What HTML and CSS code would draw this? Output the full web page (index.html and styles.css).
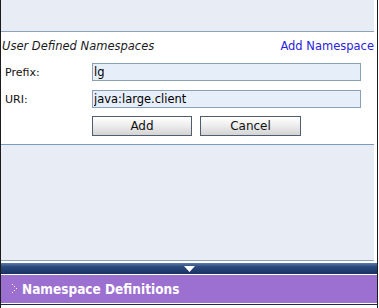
FILE: index.html
```html
<!DOCTYPE html>
<html lang="en">
  <head>
    <meta charset="UTF-8" />
    <title>User Defined Namespaces</title>
    <link rel="stylesheet" href="styles.css">
  </head>
  <body>
    <div class="frame">
      <div class="top-panel"></div>

      <div class="ns-form">
        <div class="ns-header">
          <span class="ns-title">User Defined Namespaces</span>
          <a class="ns-add" href="#">Add Namespace</a>
        </div>
        <div class="ns-row">
          <label for="prefix">Prefix:</label>
          <input type="text" id="prefix" value="lg" />
        </div>
        <div class="ns-row">
          <label for="uri">URI:</label>
          <input type="text" id="uri" value="java:large.client" />
        </div>
        <div class="ns-buttons">
          <button class="btn-add">Add</button>
          <button class="btn-cancel">Cancel</button>
        </div>
      </div>

      <div class="lower-panel"></div>

      <div class="splitter">
        <svg width="11" height="6" viewBox="0 0 11 6"><path d="M0 0 H11 L5.5 6 Z" fill="#fff" /></svg>
      </div>

      <div class="section-bar">
        <svg class="chevron" width="6" height="10" viewBox="0 0 6 10">
          <rect x="0" y="0" width="1" height="1" fill="#fff" />
          <rect x="2" y="2" width="1" height="1" fill="#fff" />
          <rect x="4" y="4" width="1" height="1" fill="#fff" />
          <rect x="2" y="6" width="1" height="1" fill="#fff" />
          <rect x="0" y="8" width="1" height="1" fill="#fff" />
        </svg>
        <span>Namespace Definitions</span>
      </div>
      <div class="bottom-line"></div>
    </div>
  </body>
</html>
```

FILE: styles.css
```css
* {
  box-sizing: border-box;
}

body {
  margin: 0;
  background: #fff;
  font-family: "DejaVu Sans", Verdana, sans-serif;
  font-size: 11px;
}

.frame {
  width: 378px;
  height: 308px;
  border-left: 1px solid #1c1c1c;
  border-right: 1px solid #1c1c1c;
  display: flex;
  flex-direction: column;
}

.top-panel {
  width: 373px;
  height: 32px;
  background: #e8ecf4;
  border-bottom: 1px solid #8ea2b8;
}

.ns-form {
  width: 373px;
  height: 113px;
  padding: 4px 0 0 0;
  border-bottom: 1px solid #7c9cc4;
}

.ns-header {
  display: flex;
  justify-content: space-between;
  align-items: center;
  height: 20px;
  padding-left: 1px;
  font-size: 11.5px;
}

.ns-title {
  font-style: italic;
  color: #1a1a1a;
}

.ns-add {
  color: #2a22dc;
  text-decoration: none;
}

.ns-row {
  display: flex;
  align-items: center;
  margin-top: 7px;
  height: 18px;
}

.ns-row + .ns-row {
  margin-top: 9px;
}

.ns-row label {
  width: 91px;
  padding-left: 4px;
  color: #111;
}

.ns-row input {
  width: 269px;
  height: 18px;
  margin: 0;
  padding: 0 1px;
  border: 1px solid #8aa0b8;
  background: #e6eefa;
  font-family: inherit;
  font-size: 11.5px;
  color: #000;
}

.ns-buttons {
  display: flex;
  gap: 8px;
  margin-top: 8px;
  padding-left: 91px;
}

.ns-buttons button {
  height: 20px;
  margin: 0;
  padding: 0;
  border: 1px solid #4e5e70;
  background: linear-gradient(#ffffff, #f0f0f0 40%, #d4d4d4);
  font-family: inherit;
  font-size: 12px;
  color: #111;
}

.btn-add {
  width: 100px;
}

.btn-cancel {
  width: 101px;
}

.lower-panel {
  width: 373px;
  height: 116px;
  background: #e8ecf4;
  border-bottom: 1px solid #8ea2b8;
}

.splitter {
  margin-top: 2px;
  height: 12px;
  background: linear-gradient(#5a7aa8, #2a4a7c 35%, #1a3262);
  border-bottom: 1px solid #fff;
  display: flex;
  justify-content: center;
  align-items: flex-start;
  padding-top: 3px;
}

.section-bar {
  height: 29px;
  background: #9c70d0;
  border-bottom: 1px solid #fff;
  display: flex;
  align-items: center;
  gap: 4px;
  padding-left: 11px;
  color: #fff;
  font-family: "DejaVu Sans Condensed", "DejaVu Sans", sans-serif;
  font-weight: bold;
  font-size: 13.5px;
}

.chevron {
  flex: none;
}

.bottom-line {
  height: 1px;
  background: #1c2c48;
}
```
